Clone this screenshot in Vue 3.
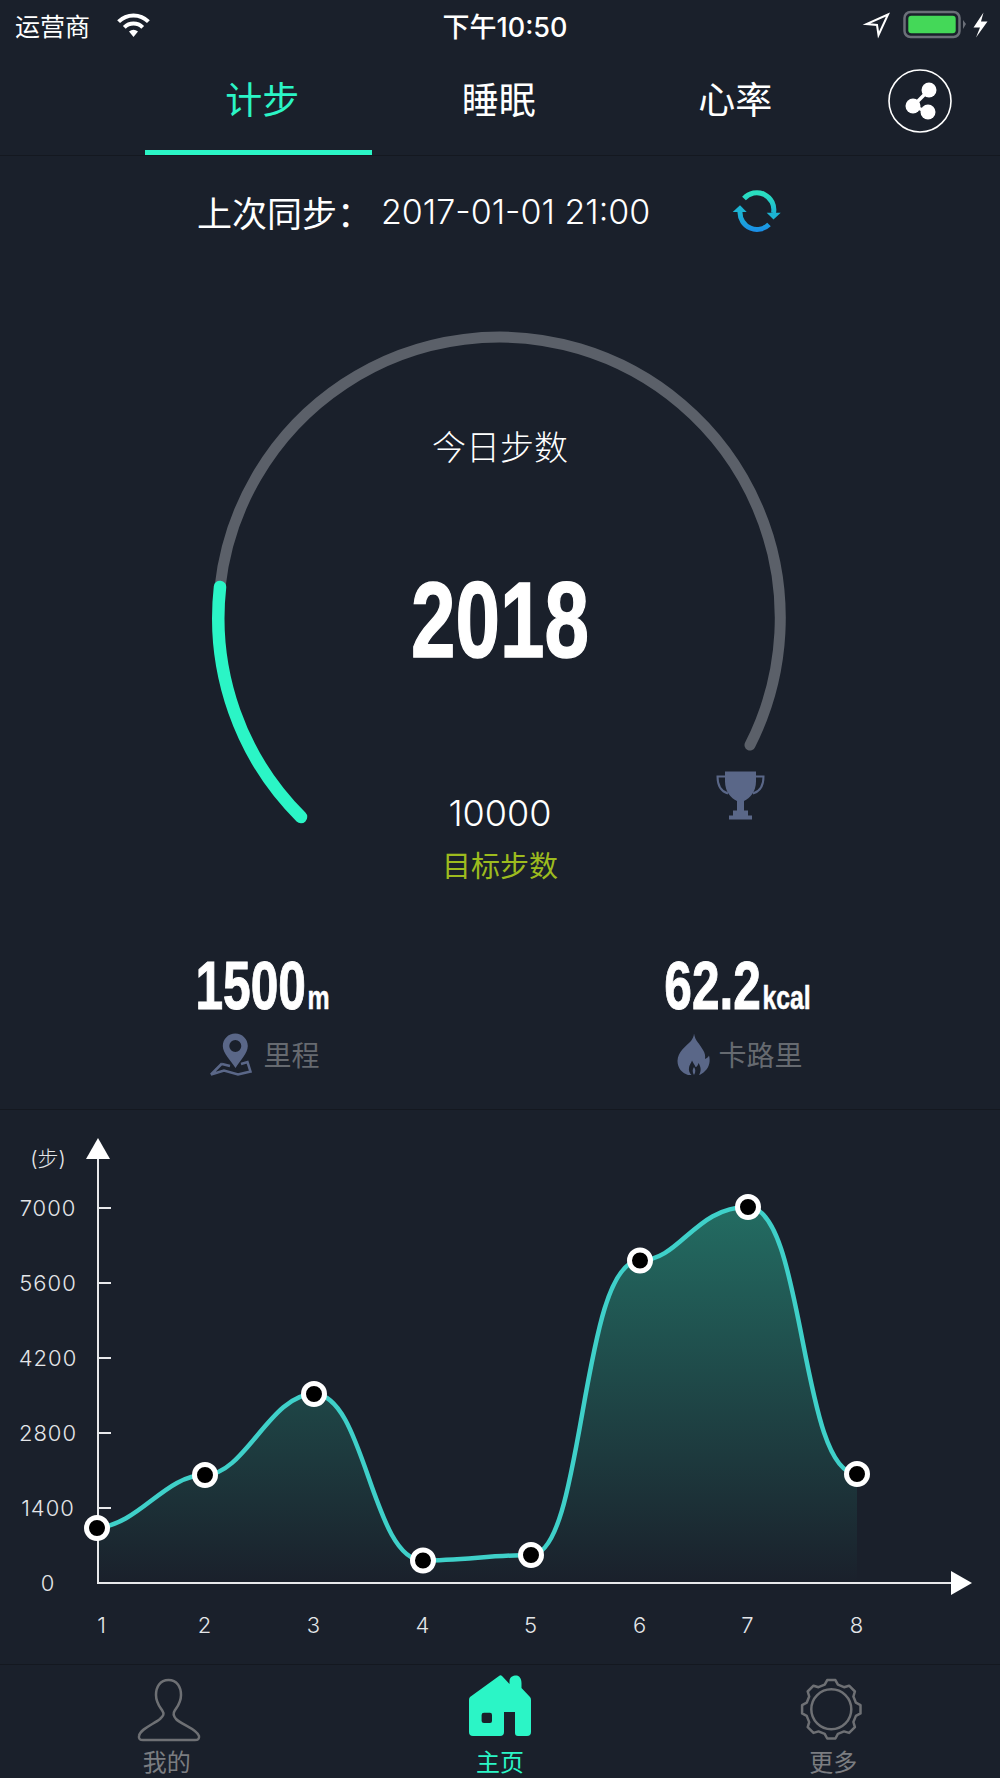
<template>
  <div class="page">
    <div class="status">
      <span class="carrier">运营商</span>
      <svg class="wifi" width="33" height="24" viewBox="0 0 33 24">
        <path d="M1.6 8.6A21 21 0 0 1 31.4 8.6M7.3 14.3A13 13 0 0 1 25.7 14.3" fill="none" stroke="#fff" stroke-width="4" />
        <path d="M16.5 24L12 18.6Q16.5 15 21 18.6Z" fill="#fff" />
      </svg>
      <span class="clock">下午10:50</span>
      <svg class="status-right" width="150" height="50" viewBox="0 0 150 50">
        <path d="M38 14.5L16.5 24L27 25L28.5 35Z" fill="none" stroke="#fff" stroke-width="2" />
        <rect x="54.5" y="12" width="55" height="25" rx="6" fill="none" stroke="#6b6f78" stroke-width="2.5" />
        <rect x="58.3" y="15.7" width="47.4" height="17.6" rx="3" fill="#44d858" />
        <path d="M113 20L116 24L113 29Z" fill="#6b6f78" />
        <path d="M133.5 12.5L123.5 27.5H130L126 37.5L137.5 21.5H131Z" fill="#fff" />
      </svg>
    </div>

    <div class="tabs">
      <div v-for="(tab, i) in tabs" :key="tab" class="tab" :class="{ active: i === 0 }">{{ tab }}</div>
      <svg class="share" width="64" height="64" viewBox="0 0 64 64">
        <circle cx="32" cy="32" r="31" fill="none" stroke="#fff" stroke-width="1.6" />
        <path d="M41 21L25 37L40 43" fill="none" stroke="#fff" stroke-width="3.5" />
        <circle cx="41" cy="21" r="7.5" fill="#fff" />
        <circle cx="25" cy="37" r="7.5" fill="#fff" />
        <circle cx="40" cy="43" r="7.5" fill="#fff" />
      </svg>
    </div>

    <div class="sync">
      <span class="sync-label">上次同步：</span>
      <span class="sync-time">2017-01-01 21:00</span>
      <svg class="sync-icon" width="75" height="60" viewBox="0 0 75 60">
        <defs>
          <linearGradient id="syncGrad" gradientUnits="userSpaceOnUse" x1="0" y1="12" x2="0" y2="50">
            <stop offset="0" stop-color="#2adfc0" />
            <stop offset="0.5" stop-color="#1cb4d4" />
            <stop offset="1" stop-color="#1a8de8" />
          </linearGradient>
        </defs>
        <path d="M24 16.5A17 17 0 0 1 53.5 31" fill="none" stroke="url(#syncGrad)" stroke-width="5" />
        <path d="M49 42.5A17 17 0 0 1 20 30" fill="none" stroke="url(#syncGrad)" stroke-width="5" />
        <path d="M46.7 30.7H60.7L53.5 37.5Z" fill="#1cb4d4" />
        <path d="M12.7 30H26.7L20 23.3Z" fill="#1cb4d4" />
      </svg>
    </div>

    <div class="gauge">
      <svg class="gauge-art" width="1000" height="618" viewBox="0 274 1000 618">
        <path d="M220 594A281 281 0 1 1 750 752" fill="none" stroke="#5b6069" stroke-width="11" stroke-linecap="round" />
        <path d="M220 594A281 281 0 0 0 301 824" fill="none" stroke="#2bf5c6" stroke-width="12.5" stroke-linecap="round" />
        <g transform="translate(716 778.5)" fill="#5a6788">
          <path d="M9 0H40V10C40 20 34 27 28 29.5V39H32V44H36V48H13V44H17V39H21V29.5C15 27 9 20 9 10Z" />
          <path d="M9 5H1.5C1.5 14 5 20 12 22M40 5H47.5C47.5 14 44 20 37 22" fill="none" stroke="#5a6788" stroke-width="2" />
        </g>
      </svg>
      <div class="today">今日步数</div>
      <div class="steps">2018</div>
      <div class="goal">10000</div>
      <div class="goal-label">目标步数</div>
    </div>

    <div class="stats">
      <div class="stat">
        <div class="stat-num">1500<small>m</small></div>
        <div class="stat-label">
          <svg width="56" height="50" viewBox="8 4 56 50">
            <path d="M25 38.5L14 49.5L27 45.5L41 49.5L53.5 46.5L50.5 37L44 39M25 39L33 41" fill="none" stroke="#5a6788" stroke-width="2.5" />
            <path fill-rule="evenodd" d="M38.3 8.5C45.2 8.5 50.8 14 50.8 21C50.8 28 43 36 38.5 43C34 36 25.8 28 25.8 21C25.8 14 31.4 8.5 38.3 8.5ZM38.3 15A6 6 0 1 0 38.3 27A6 6 0 1 0 38.3 15Z" fill="#5a6788" />
          </svg>
          <span>里程</span>
        </div>
      </div>
      <div class="stat">
        <div class="stat-num">62.2<small>kcal</small></div>
        <div class="stat-label">
          <svg width="44" height="50" viewBox="8 4 44 50">
            <path d="M30 8.5C31 16 36 19 39 25C41 28 41.5 31 41 34C43 33 44.5 32 45 30.5C46.5 36 45.5 42 41 46C39 48 37 49.5 35 50C37.5 46 37 42 34.5 38C34 40 33 42 31.5 42C31 40 29 38 28 35.5C27.5 38 25 40 25 43C24.5 45.5 25.5 48 27.5 50H24C18 48 13.5 43 13.5 36C13.5 27 22 21 27 16C28.5 14 30 11 30 8.5Z" fill="#5a6788" />
            <path d="M30 50C28 47 28.5 44 30 42C31.5 44 32 47 30 50Z" fill="#5a6788" />
          </svg>
          <span>卡路里</span>
        </div>
      </div>
    </div>

    <div class="chart">
      <svg width="1000" height="554" viewBox="0 1105 1000 554">
        <defs>
          <linearGradient id="areaGrad" gradientUnits="userSpaceOnUse" x1="0" y1="1202" x2="0" y2="1578">
            <stop offset="0" stop-color="#236c62" />
            <stop offset="1" stop-color="#1a202b" />
          </linearGradient>
        </defs>
        <path :d="curve + 'V1578H97Z'" fill="url(#areaGrad)" />

        <path d="M98 1150V1578H955" fill="none" stroke="#e8e9eb" stroke-width="2" />
        <path d="M86 1154L98 1133L110 1154Z" fill="#fff" />
        <path d="M951 1566L972 1578L951 1590Z" fill="#fff" />
        <line v-for="t in ticks.slice(1)" :key="t.label" x1="98" x2="111" :y1="t.y" :y2="t.y" stroke="#e8e9eb" stroke-width="2" />

        <text x="48" y="1161" class="axis-text unit">(步)</text>
        <text v-for="t in ticks" :key="'l' + t.label" x="48" :y="t.y + 8" class="axis-text">{{ t.label }}</text>
        <text v-for="(p, i) in points" :key="'x' + i" :x="i === 0 ? 102 : p[0]" y="1628" class="axis-text">{{ i + 1 }}</text>

        <path :d="curve" fill="none" stroke="#3fd0c9" stroke-width="4.5" />
        <circle v-for="(p, i) in points" :key="'p' + i" :cx="p[0]" :cy="p[1]" r="10.5" fill="#000" stroke="#fff" stroke-width="5" />
      </svg>
    </div>

    <div class="nav">
      <div class="nav-item">
        <svg width="90" height="80" viewBox="0 0 90 80">
          <path d="M46.5 10C38 10 34 17 34 25C34 33 38 37 40.5 41C42.5 44 41.5 45.5 38 49C32 54 18 59 17 66C16.5 69 18 70 21 70H73C76 70 77.5 69 77 66C75 59 60 55 54 49C51.5 46 50.5 44 52.5 41C55 37 59 33 59 25C59 17 55 10 46.5 10Z" fill="none" stroke="#6e7074" stroke-width="2.5" />
        </svg>
        <span>我的</span>
      </div>
      <div class="nav-item active">
        <svg width="76" height="80" viewBox="0 0 76 80">
          <path fill-rule="evenodd" fill="#2bf5c6" d="M37 6Q38.5 4.5 40 6L47.5 14V11C47.5 7 51 5.5 54 5.5C57 5.5 59.5 8 59.5 13V18L68 27Q69 28 69 30V62Q69 66 65 66H56Q53 66 53 63V42H42V62Q42 66 38 66H11Q7 66 7 62V30Q7 28 8 27ZM22 42.7Q19.6 42.7 19.6 45V51Q19.6 53 22 53H28Q30 53 30 51V45Q30 42.7 28 42.7Z" />
        </svg>
        <span>主页</span>
      </div>
      <div class="nav-item">
        <svg width="90" height="80" viewBox="0 0 90 80">
          <path :d="gear" fill="none" stroke="#6e7074" stroke-width="2.5" stroke-linejoin="round" />
          <circle cx="43.3" cy="39.3" r="20" fill="none" stroke="#6e7074" stroke-width="2.5" />
        </svg>
        <span>更多</span>
      </div>
    </div>
  </div>
</template>

<script setup>
const tabs = ['计步', '睡眠', '心率']

const ticks = [
  { label: '0', y: 1578 },
  { label: '1400', y: 1503 },
  { label: '2800', y: 1428 },
  { label: '4200', y: 1353 },
  { label: '5600', y: 1278 },
  { label: '7000', y: 1203 }
]

const points = [
  [97, 1523],
  [205, 1470],
  [314, 1389],
  [423, 1555.5],
  [531, 1550],
  [640, 1255.5],
  [748, 1202],
  [857, 1469]
]

// hand fitted to the reference, the data alone doesn't give these tangents
const curve =
  'M97 1523C140 1519 165 1470 205 1470' +
  'C245 1470 270 1389 314 1389' +
  'C365 1389 372 1555.5 423 1555.5' +
  'C460 1555.5 495 1550 531 1550' +
  'C585 1550 580 1255.5 640 1255.5' +
  'C680 1255.5 695 1202 748 1202' +
  'C805 1202 800 1469 857 1469'

function makeGear(cx, cy, teeth) {
  const out = []
  const at = (deg, r) => {
    const a = (deg * Math.PI) / 180
    return (cx + r * Math.sin(a)).toFixed(1) + ' ' + (cy - r * Math.cos(a)).toFixed(1)
  }
  for (let i = 0; i < teeth; i++) {
    const a = (360 / teeth) * i
    out.push(at(a - 15, 25.5), at(a - 8, 29.5), at(a + 8, 29.5), at(a + 15, 25.5))
  }
  return 'M' + out.join('L') + 'Z'
}

const gear = makeGear(43.3, 39.3, 8)
</script>

<style>
html,
body {
  background: #1a202b;
}
</style>

<style scoped>
.page {
  width: 1000px;
  height: 1778px;
  overflow: hidden;
  display: flex;
  flex-direction: column;
  background: #1a202b;
  color: #fff;
  font-family: "Inter", "Noto Sans CJK SC", sans-serif;
}

.status {
  height: 50px;
  display: flex;
  align-items: center;
  padding-left: 15px;
  position: relative;
}

.carrier {
  font-size: 25px;
  width: 102px;
}

.wifi {
  display: block;
}

.clock {
  position: absolute;
  left: 0;
  right: 0;
  text-align: center;
  margin-left: 10px;
  font-size: 27px;
  font-weight: 500;
}

.status-right {
  margin-left: auto;
}

.tabs {
  height: 105px;
  display: flex;
  align-items: flex-start;
  padding-left: 144px;
  border-bottom: 1px solid #141820;
  position: relative;
}

.tab {
  width: 236.5px;
  height: 105px;
  line-height: 102px;
  text-align: center;
  font-size: 37px;
  position: relative;
}

.tab.active {
  color: #2bf5c6;
}

.tab.active::after {
  content: "";
  position: absolute;
  left: 1px;
  bottom: 0;
  width: 227px;
  height: 5px;
  background: #2bf5c6;
}

.share {
  position: absolute;
  left: 888px;
  top: 19px;
}

.sync {
  height: 118px;
  display: flex;
  align-items: center;
  padding-left: 197px;
}

.sync-label {
  font-size: 35px;
  width: 184px;
}

.sync-time {
  font-size: 34px;
  font-weight: 300;
  width: 339px;
}

.sync-icon {
  display: block;
}

.gauge {
  position: relative;
  height: 618px;
  padding-top: 161px;
  box-sizing: border-box;
  text-align: center;
}

.gauge-art {
  position: absolute;
  left: 0;
  top: 0;
}

.today {
  position: relative;
  font-size: 34px;
  line-height: 40px;
  font-weight: 300;
}

.steps {
  position: relative;
  margin-top: 92px;
  font-family: "Liberation Sans", sans-serif;
  font-size: 108px;
  line-height: 120px;
  font-weight: 700;
  transform: scaleX(0.74);
  -webkit-text-stroke: 1.5px #fff;
}

.goal {
  position: relative;
  margin-top: 111px;
  font-size: 36px;
  line-height: 44px;
  font-weight: 300;
}

.goal-label {
  position: relative;
  margin-top: 14px;
  font-size: 29px;
  line-height: 36px;
  color: #9dbb1e;
}

.stats {
  display: grid;
  grid-template-columns: 1fr 1fr;
  padding: 70px 25px 33px;
  border-bottom: 1px solid #141820;
}

.stat {
  text-align: center;
}

.stat-num {
  font-family: "Liberation Sans", sans-serif;
  font-size: 68px;
  line-height: 60px;
  font-weight: 700;
  transform: scaleX(0.73);
  -webkit-text-stroke: 1px #fff;
}

.stat-num small {
  font-size: 34px;
  margin-left: 2px;
  -webkit-text-stroke: 0.5px #fff;
}

.stat-label {
  margin-top: 5px;
  height: 44px;
  display: flex;
  align-items: center;
  justify-content: center;
  gap: 2px;
  font-size: 28px;
  color: #666a70;
}

.stat-label svg {
  display: block;
}

.chart {
  height: 554px;
  border-bottom: 1px solid #141820;
}

.chart svg {
  display: block;
}

.axis-text {
  font-family: "Inter", "Noto Sans CJK SC", sans-serif;
  font-size: 22px;
  font-weight: 300;
  letter-spacing: 1px;
  fill: #e4e6e9;
  text-anchor: middle;
}

.unit {
  font-size: 21px;
  letter-spacing: 0;
}

.nav {
  flex: 1;
  display: grid;
  grid-template-columns: repeat(3, 1fr);
  padding: 0 0 0 0;
}

.nav-item {
  position: relative;
  display: flex;
  flex-direction: column;
  align-items: center;
  padding-top: 5px;
  font-size: 24px;
  line-height: 30px;
  color: #7b7d81;
}

.nav-item svg {
  display: block;
  height: 80px;
}

.nav-item span {
  margin-top: -2px;
}

.nav-item.active {
  color: #2bf5c6;
}
</style>
